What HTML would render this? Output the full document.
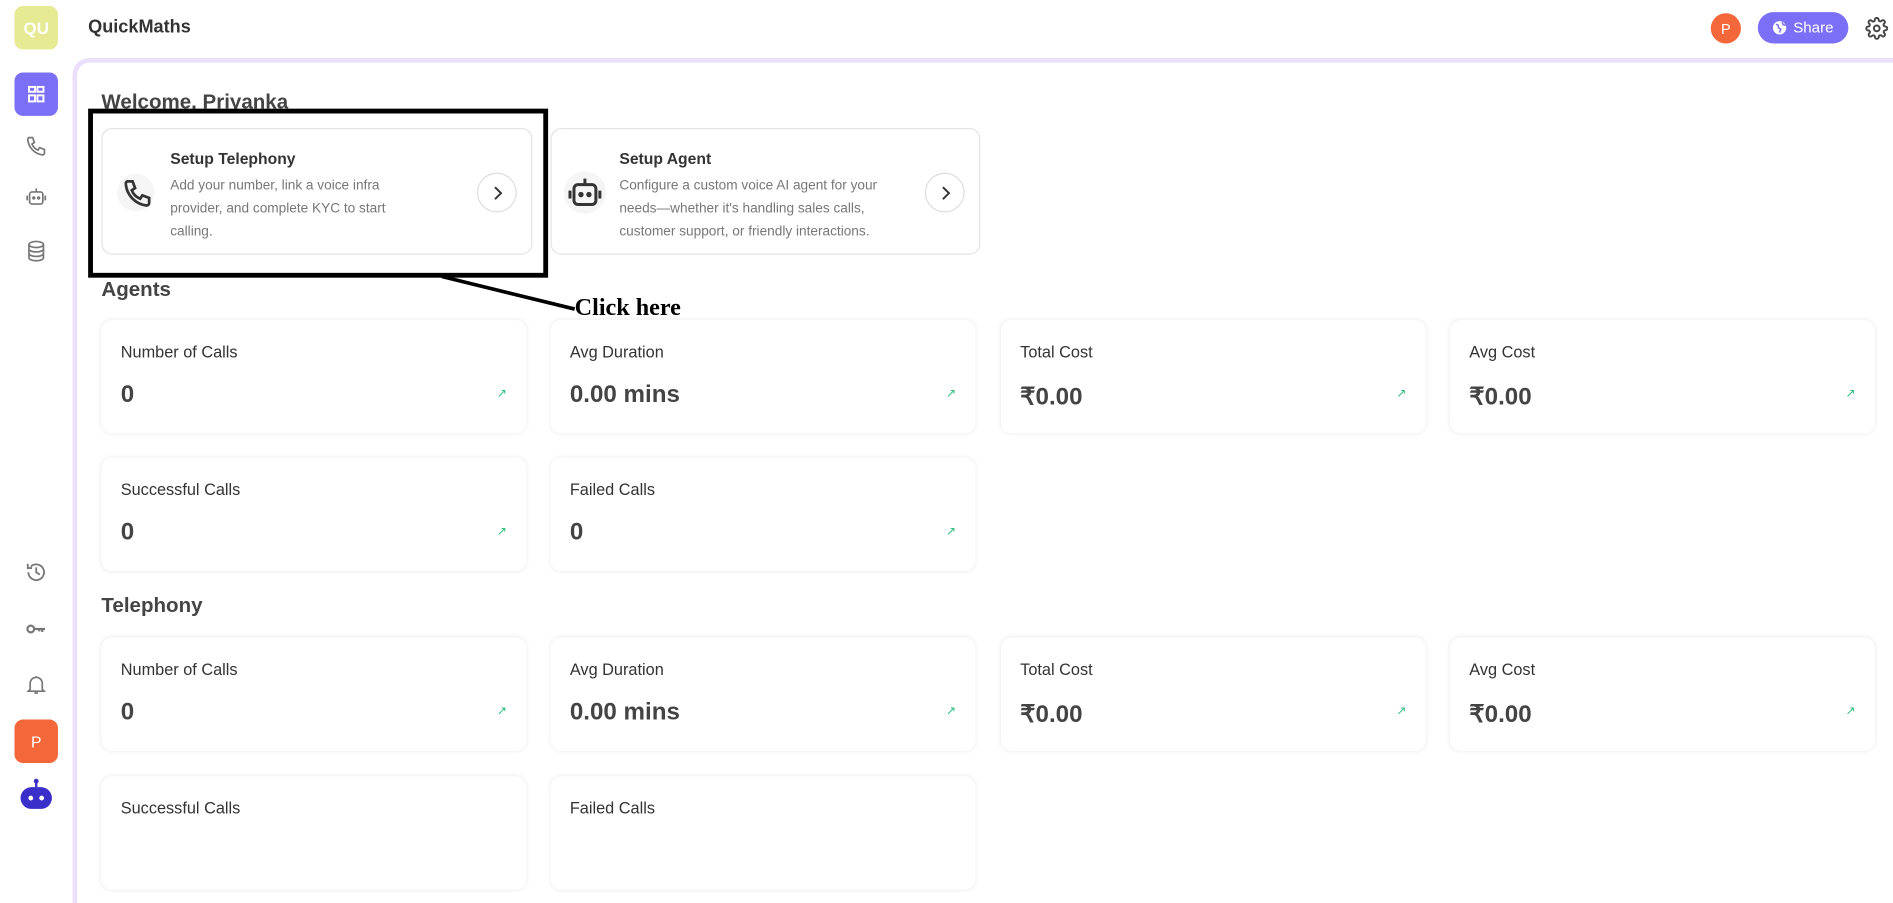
<!DOCTYPE html>
<html><head><meta charset="utf-8"><style>
*{box-sizing:border-box;margin:0;padding:0}
html,body{width:1893px;height:822px;overflow:hidden;background:#fff;font-family:"Liberation Sans",sans-serif;color:#333}
#w{position:absolute;left:0;top:0;width:1568px;height:681px;transform:scale(1.2073);transform-origin:0 0}
.a{position:absolute}
.main{left:60px;top:48px;width:1530px;height:700px;border:4px solid #ebe0fb;border-right:none;border-bottom:none;border-radius:14px 0 0 0}
.sb{left:12px;width:36px;height:36px;border-radius:7px;display:flex;align-items:center;justify-content:center;color:#fff;font-size:14px;font-weight:bold}
.ic{left:20px;width:20px;height:20px}
.card{border:1px solid #e3e3e3;border-radius:9px;background:#fff}
.card h4{position:absolute;left:56px;top:17px;font-size:13px;font-weight:bold;color:#333}
.card p{position:absolute;left:56px;top:38px;font-size:11.3px;line-height:19px;color:#777;width:235px}
.circ{position:absolute;width:33px;height:33px;border:1px solid #ddd;border-radius:50%;top:36px;display:flex;align-items:center;justify-content:center}
.st{border-radius:9px;background:#fff;box-shadow:0 0 4px rgba(0,0,0,.09);width:352px;height:94px}
.st .t{position:absolute;left:16px;top:19px;font-size:13.5px;color:#333}
.st .v{position:absolute;left:16px;top:51px;font-size:20px;font-weight:bold;color:#444}
.st .ar{position:absolute;right:16px;top:56px;color:#2bbf80;font-size:10px}
.h{font-size:17px;font-weight:bold;color:#444}
</style></head><body><div id="w">
<div class="a sb" style="top:5px;background:#e5ea93">QU</div>
<div class="a" style="left:73px;top:14px;font-size:15px;font-weight:bold;color:#333">QuickMaths</div>
<div class="a sb" style="top:60px;background:#7b6ff7"><svg width="16" height="16" viewBox="0 0 16 16" fill="none" stroke="#fff" stroke-width="1.6"><rect x="2" y="2" width="5" height="4"/><rect x="9" y="2" width="5" height="4"/><rect x="2" y="9" width="5" height="5"/><rect x="9" y="9" width="5" height="5"/></svg></div>
<svg class="a ic" style="top:111px" viewBox="0 0 20 20" fill="none" stroke="#777" stroke-width="1.4"><path d="M4 3h3l1.5 4-2 1.3a9 9 0 0 0 5 5l1.3-2 4 1.5v3a1.5 1.5 0 0 1-1.5 1.5A14 14 0 0 1 3 4.5 1.5 1.5 0 0 1 4 3z"/></svg>
<svg class="a ic" style="top:153px" viewBox="0 0 20 20" fill="none" stroke="#777" stroke-width="1.4"><rect x="4.5" y="6" width="11" height="10" rx="2"/><path d="M10 6V3M2.5 9v4M17.5 9v4"/><circle cx="8" cy="11" r=".7" fill="#777"/><circle cx="12" cy="11" r=".7" fill="#777"/></svg>
<svg class="a ic" style="top:198px" viewBox="0 0 20 20" fill="none" stroke="#777" stroke-width="1.4"><ellipse cx="10" cy="4.5" rx="6" ry="2.5"/><path d="M4 4.5v11c0 1.4 2.7 2.5 6 2.5s6-1.1 6-2.5v-11M4 8.2c0 1.4 2.7 2.5 6 2.5s6-1.1 6-2.5M4 11.9c0 1.4 2.7 2.5 6 2.5s6-1.1 6-2.5"/></svg>
<svg class="a ic" style="top:464px" viewBox="0 0 20 20" fill="none" stroke="#777" stroke-width="1.5"><path d="M3.5 10a6.5 6.5 0 1 0 2-4.7M3 3v3.5h3.5M10 6v4l3 2"/></svg>
<svg class="a ic" style="top:511px" viewBox="0 0 20 20" fill="none" stroke="#777" stroke-width="1.8"><circle cx="5.5" cy="10" r="2.8"/><path d="M8.3 10h9M15 10v2.5M12.5 10v2"/></svg>
<svg class="a ic" style="top:557px" viewBox="0 0 20 20" fill="none" stroke="#777" stroke-width="1.4"><path d="M5 14V9a5 5 0 0 1 10 0v5l1.5 1.5h-13zM8.5 17h3M10 3v1"/></svg>
<div class="a sb" style="top:596px;background:#f4673a;font-weight:normal;font-size:13px">P</div>
<svg class="a" style="left:15px;top:644px" width="30" height="28" viewBox="0 0 30 28"><circle cx="15" cy="3" r="2" fill="#3b2fc9"/><path d="M15 3v5" stroke="#3b2fc9" stroke-width="2"/><rect x="2" y="8" width="26" height="18" rx="9" fill="#3b2fc9"/><circle cx="10.5" cy="17" r="2" fill="#fff"/><circle cx="19.5" cy="17" r="2" fill="#fff"/></svg>

<div class="a" style="left:1417px;top:11px;width:25px;height:25px;border-radius:50%;background:#f4673a;color:#fff;font-size:12px;display:flex;align-items:center;justify-content:center">P</div>
<div class="a" style="left:1456px;top:10px;width:75px;height:26px;border-radius:13px;background:#7b6ff7;color:#fff;font-size:12.5px;display:flex;align-items:center;justify-content:center;gap:5px"><svg width="12" height="12" viewBox="0 0 12 12"><circle cx="6" cy="6" r="5.5" fill="#fff"/><path d="M3 3l2 1 0 2 2 1-1 3M8 1.5l1 2 2 .5" stroke="#7b6ff7" stroke-width="1.3" fill="none"/></svg>Share</div>
<svg class="a" style="left:1545px;top:14px" width="19" height="19" viewBox="0 0 24 24" fill="none" stroke="#444" stroke-width="2"><circle cx="12" cy="12" r="3"/><path d="M19.4 15a1.7 1.7 0 0 0 .3 1.8l.1.1a2 2 0 1 1-2.8 2.8l-.1-.1a1.7 1.7 0 0 0-1.8-.3 1.7 1.7 0 0 0-1 1.5V21a2 2 0 1 1-4 0v-.1a1.7 1.7 0 0 0-1.1-1.5 1.7 1.7 0 0 0-1.8.3l-.1.1a2 2 0 1 1-2.8-2.8l.1-.1a1.7 1.7 0 0 0 .3-1.8 1.7 1.7 0 0 0-1.5-1H3a2 2 0 1 1 0-4h.1a1.7 1.7 0 0 0 1.5-1.1 1.7 1.7 0 0 0-.3-1.8l-.1-.1a2 2 0 1 1 2.8-2.8l.1.1a1.7 1.7 0 0 0 1.8.3H9a1.7 1.7 0 0 0 1-1.5V3a2 2 0 1 1 4 0v.1a1.7 1.7 0 0 0 1 1.5 1.7 1.7 0 0 0 1.8-.3l.1-.1a2 2 0 1 1 2.8 2.8l-.1.1a1.7 1.7 0 0 0-.3 1.8V9a1.7 1.7 0 0 0 1.5 1H21a2 2 0 1 1 0 4h-.1a1.7 1.7 0 0 0-1.5 1z"/></svg>

<div class="a main"></div>
<div class="a h" style="left:84px;top:75px">Welcome, Priyanka</div>

<div class="a card" style="left:84px;top:106px;width:357px;height:105px">
<div class="a" style="left:12px;top:37px;width:31px;height:31px;border-radius:50%;background:#f5f5f5"></div>
<svg class="a" style="left:15px;top:39px" width="28" height="28" viewBox="0 0 20 20" fill="none" stroke="#333" stroke-width="1.6"><path d="M4 3h3l1.5 4-2 1.3a9 9 0 0 0 5 5l1.3-2 4 1.5v3a1.5 1.5 0 0 1-1.5 1.5A14 14 0 0 1 3 4.5 1.5 1.5 0 0 1 4 3z"/></svg>
<h4>Setup Telephony</h4><p style="width:215px">Add your number, link a voice infra provider, and complete KYC to start calling.</p>
<div class="circ" style="left:310px"><svg width="10" height="14" viewBox="0 0 10 14" fill="none" stroke="#333" stroke-width="1.6"><path d="M3 2l5 5-5 5"/></svg></div></div>

<div class="a card" style="left:456px;top:106px;width:356px;height:105px">
<div class="a" style="left:10px;top:35px;width:35px;height:35px;border-radius:50%;background:#f5f5f5"></div>
<svg class="a" style="left:11px;top:36px" width="33" height="33" viewBox="0 0 20 20" fill="none" stroke="#333" stroke-width="1.5"><rect x="4.5" y="6" width="11" height="10" rx="2"/><path d="M10 6V3M2.5 9v4M17.5 9v4"/><circle cx="8" cy="11" r=".6" fill="#333"/><circle cx="12" cy="11" r=".6" fill="#333"/></svg>
<h4>Setup Agent</h4><p style="width:245px"><span style="white-space:nowrap">Configure a custom voice AI agent for your</span><br><span style="white-space:nowrap">needs—whether it's handling sales calls,</span><br><span style="white-space:nowrap">customer support, or friendly interactions.</span></p>
<div class="circ" style="left:309px"><svg width="10" height="14" viewBox="0 0 10 14" fill="none" stroke="#333" stroke-width="1.6"><path d="M3 2l5 5-5 5"/></svg></div></div>

<div class="a" style="left:73px;top:90px;width:381px;height:140px;border:4px solid #000"></div>
<svg class="a" style="left:360px;top:226px" width="120" height="36"><path d="M6 3L116 30" stroke="#000" stroke-width="3"/></svg>
<div class="a" style="left:476px;top:244px;font-family:'Liberation Serif',serif;font-weight:bold;font-size:20px;color:#000">Click here</div>

<div class="a h" style="left:84px;top:230px">Agents</div>
<div class="a st" style="left:84px;top:265px"><div class="t">Number of Calls</div><div class="v">0</div><div class="ar">↗</div></div>
<div class="a st" style="left:456px;top:265px"><div class="t">Avg Duration</div><div class="v">0.00 mins</div><div class="ar">↗</div></div>
<div class="a st" style="left:829px;top:265px"><div class="t">Total Cost</div><div class="v">₹0.00</div><div class="ar">↗</div></div>
<div class="a st" style="left:1201px;top:265px"><div class="t">Avg Cost</div><div class="v">₹0.00</div><div class="ar">↗</div></div>
<div class="a st" style="left:84px;top:379px"><div class="t">Successful Calls</div><div class="v">0</div><div class="ar">↗</div></div>
<div class="a st" style="left:456px;top:379px"><div class="t">Failed Calls</div><div class="v">0</div><div class="ar">↗</div></div>

<div class="a h" style="left:84px;top:492px">Telephony</div>
<div class="a st" style="left:84px;top:528px"><div class="t">Number of Calls</div><div class="v">0</div><div class="ar">↗</div></div>
<div class="a st" style="left:456px;top:528px"><div class="t">Avg Duration</div><div class="v">0.00 mins</div><div class="ar">↗</div></div>
<div class="a st" style="left:829px;top:528px"><div class="t">Total Cost</div><div class="v">₹0.00</div><div class="ar">↗</div></div>
<div class="a st" style="left:1201px;top:528px"><div class="t">Avg Cost</div><div class="v">₹0.00</div><div class="ar">↗</div></div>
<div class="a st" style="left:84px;top:643px"><div class="t">Successful Calls</div></div>
<div class="a st" style="left:456px;top:643px"><div class="t">Failed Calls</div></div>
</div></body></html>
